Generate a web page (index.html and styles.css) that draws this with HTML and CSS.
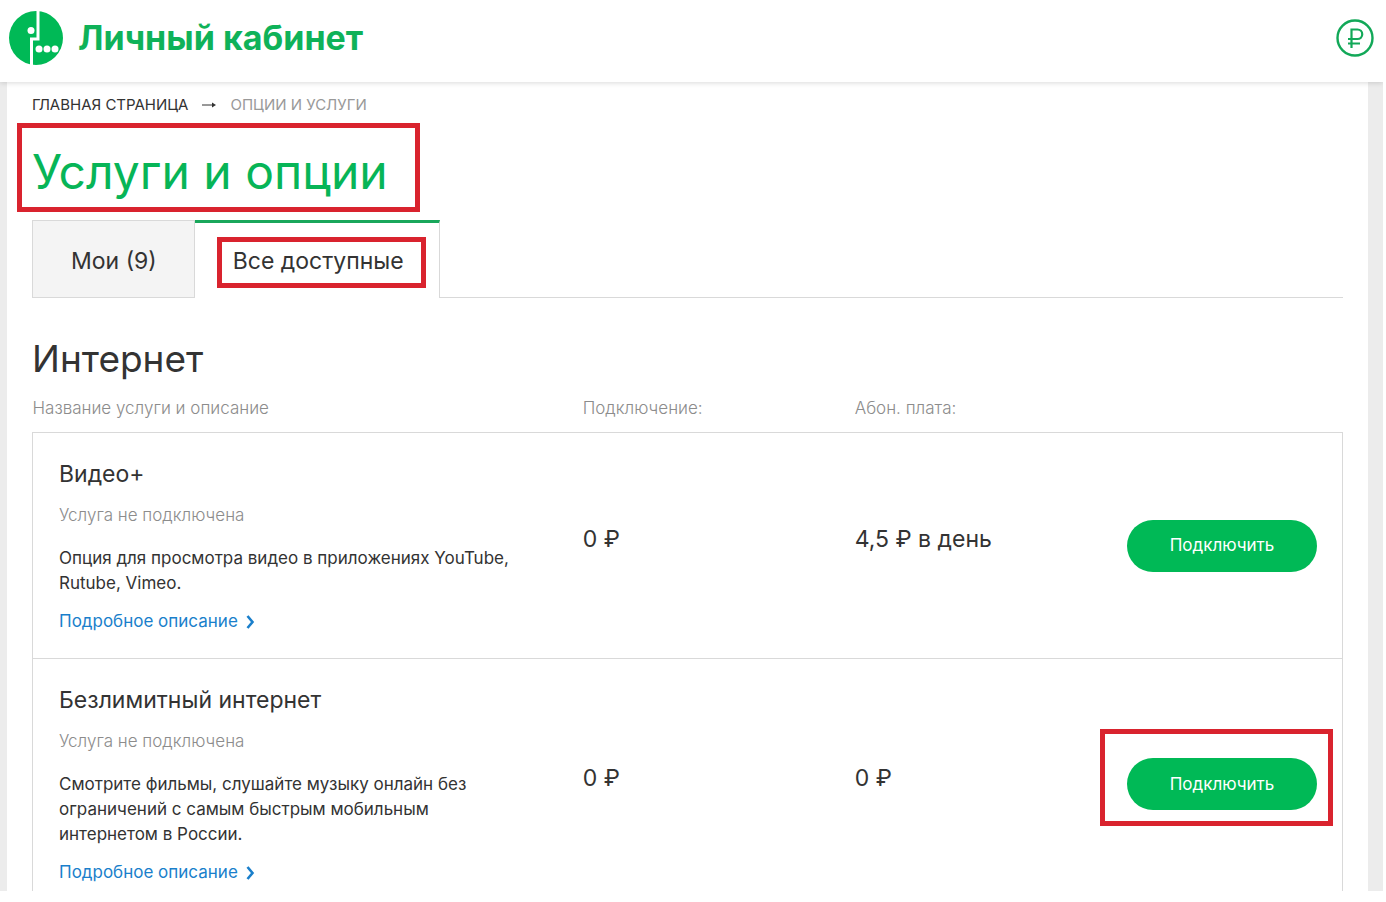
FILE: index.html
```html
<!DOCTYPE html>
<html lang="ru">
<head>
    <meta charset="utf-8">
    <title>Личный кабинет</title>
    <link rel="stylesheet" href="styles.css">
</head>
<body>
    <div class="page">
        <header class="header">
            <a class="logo" href="#">
                <svg class="logo-icon" viewBox="0 0 54 54" aria-hidden="true">
                    <circle cx="27" cy="27" r="27" fill="#00b956"/>
                    <path d="M29 0V28H22.500V54" fill="none" stroke="#fff" stroke-width="3"/>
                    <g fill="#fff">
                        <circle cx="22" cy="19.500" r="3.500"/>
                        <circle cx="30" cy="38" r="3.500"/>
                        <circle cx="38" cy="38" r="3.500"/>
                        <circle cx="46" cy="38" r="3.500"/>
                    </g>
                </svg>
                <span class="logo-text">Личный кабинет</span>
            </a>
            <a class="balance" href="#" aria-label="Баланс">
                <svg class="balance-icon" viewBox="0 0 38 38" fill="none" stroke="#12a858" stroke-width="2.200">
                    <circle cx="19" cy="19" r="17.500" stroke-width="2.400"/>
                    <path d="M15.500 29V10.500H21.500A4.700 4.700 0 0 1 21.500 20H12M12 24.500H24"/>
                </svg>
            </a>
        </header>
        <main class="content">
            <nav class="breadcrumbs">
                <a href="#">Главная страница</a>
                <svg class="arrow" viewBox="0 0 14 8" aria-hidden="true">
                    <path d="M0 4H12" stroke="#333"/>
                    <path d="M10 1.500L14 4L10 6.500Z" fill="#333"/>
                </svg>
                <span>Опции и услуги</span>
            </nav>
            <h1 class="title mark">Услуги и опции</h1>
            <nav class="tabs">
                <a class="tab" href="#">Мои (9)</a>
                <a class="tab active" href="#"><span class="mark">Все доступные</span></a>
            </nav>
            <h2 class="section-title">Интернет</h2>
            <table class="services">
                <thead>
                    <tr>
                        <th class="col-name">Название услуги и описание</th>
                        <th class="col-price">Подключение:</th>
                        <th class="col-price">Абон. плата:</th>
                        <th></th>
                    </tr>
                </thead>
                <tbody>
                    <tr>
                        <td class="info">
                            <h3>Видео+</h3>
                            <p class="status">Услуга не подключена</p>
                            <p class="description">Опция для просмотра видео в приложениях YouTube, Rutube, Vimeo.</p>
                            <a class="more" href="#">Подробное описание<svg viewBox="0 0 9 14" aria-hidden="true"><path d="M1.500 1L6.500 7L1.500 13" fill="none" stroke="#1a7fcb" stroke-width="2.600"/></svg></a>
                        </td>
                        <td class="price">0 ₽</td>
                        <td class="price">4,5 ₽ в день</td>
                        <td class="action"><span class="button-wrap"><button type="button">Подключить</button></span></td>
                    </tr>
                    <tr>
                        <td class="info">
                            <h3>Безлимитный интернет</h3>
                            <p class="status">Услуга не подключена</p>
                            <p class="description">Смотрите фильмы, слушайте музыку онлайн без ограничений с самым быстрым мобильным интернетом в России.</p>
                            <a class="more" href="#">Подробное описание<svg viewBox="0 0 9 14" aria-hidden="true"><path d="M1.500 1L6.500 7L1.500 13" fill="none" stroke="#1a7fcb" stroke-width="2.600"/></svg></a>
                        </td>
                        <td class="price">0 ₽</td>
                        <td class="price">0 ₽</td>
                        <td class="action"><span class="button-wrap mark"><button type="button">Подключить</button></span></td>
                    </tr>
                </tbody>
            </table>
        </main>
    </div>
</body>
</html>
```
FILE: styles.css
```css
* {
    box-sizing: border-box;
}

body {
    margin: 0;
    padding: 0 3px 11px 0;
    height: 100vh;
    overflow: hidden;
    background-color: #fff;
    color: #333;
    font-family: Inter, "Liberation Sans", sans-serif;
    font-size: 17px;
    line-height: 25px;
}

a {
    color: inherit;
    text-decoration: none;
}

h1, h2, h3, p {
    margin: 0;
    font-weight: 400;
}

.page {
    display: flex;
    flex-direction: column;
    height: 100%;
    overflow: hidden;
    background-color: #ececec;
}

.header {
    display: flex;
    flex-shrink: 0;
    align-items: center;
    justify-content: space-between;
    height: 82px;
    padding: 0 9px 7px;
    background-color: #fff;
    box-shadow: 0 1px 5px rgba(0, 0, 0, 0.15);
    z-index: 1;
}

.logo {
    display: flex;
    align-items: center;
    gap: 15px;
}

.logo-icon {
    width: 54px;
    height: 54px;
}

.logo-text {
    color: #0fb259;
    font-size: 34px;
    font-weight: 700;
    line-height: 44px;
}

.balance-icon {
    display: block;
    width: 38px;
    height: 38px;
}

.content {
    flex-shrink: 0;
    margin: 0 15px 0 7px;
    padding: 10px 25px;
    background-color: #fff;
}

.breadcrumbs {
    display: flex;
    align-items: center;
    gap: 14px;
    font-size: 15px;
    text-transform: uppercase;
}

.breadcrumbs span {
    color: #999;
}

.arrow {
    width: 14px;
    height: 8px;
}

.title {
    width: fit-content;
    margin: 25px 0 18px;
    color: #07b557;
    font-size: 48px;
    line-height: 60px;
}

/* red highlight frames */
.mark {
    position: relative;
}

.mark::after {
    content: "";
    position: absolute;
    inset: -10px -22px -13px -16px;
    border: 5px solid #d9232e;
    pointer-events: none;
}

.title.mark::after {
    inset: -19px -32px -10px -15px;
}

.button-wrap.mark::after {
    inset: -29px -16px -16px -27px;
}

.tabs {
    display: flex;
    border-bottom: 1px solid #d9d9d9;
    font-size: 23px;
    line-height: 30px;
}

.tab {
    padding: 25px 37px 21px 38px;
    border: 1px solid #d9d9d9;
    border-bottom: none;
    background-color: #f4f4f4;
}

.tab.active {
    margin-bottom: -1px;
    border-width: 3px 1px 0 0;
    border-top-color: #19a75b;
    padding: 23px 35px 22px 38px;
    background-color: #fff;
}

.section-title {
    margin: 37px 0 13px;
    font-size: 37px;
    line-height: 48px;
}

.services {
    width: 100%;
    table-layout: fixed;
    border-collapse: collapse;
}

.services th {
    padding: 0 0 11px;
    color: #8c8c8c;
    font-weight: 300;
    text-align: left;
}

.col-name {
    width: 42%;
}

.col-price {
    width: 272px;
}

.services tbody {
    border: 1px solid #d9d9d9;
}

.services tbody tr {
    border-bottom: 1px solid #d9d9d9;
}

.services td {
    padding: 0;
}

.services .info {
    padding: 26px 64px 24px 26px;
}

h3 {
    font-size: 23px;
    line-height: 30px;
}

.status {
    margin: 14px 0 18px;
    color: #8c8c8c;
    font-weight: 300;
}

.description {
    margin-bottom: 13px;
}

.more {
    display: flex;
    align-items: center;
    gap: 8px;
    color: #1a7fcb;
}

.more svg {
    width: 9px;
    height: 14px;
}

.services .price {
    padding-bottom: 13px;
    font-size: 23px;
    line-height: 30px;
}

.services .action {
    padding-right: 28px;
}

.button-wrap {
    display: block;
    width: fit-content;
    margin-left: auto;
}

button {
    display: block;
    height: 52px;
    padding: 0 43px;
    border: none;
    border-radius: 26px;
    background-color: #00b956;
    color: #fff;
    font: inherit;
    cursor: pointer;
}
```
